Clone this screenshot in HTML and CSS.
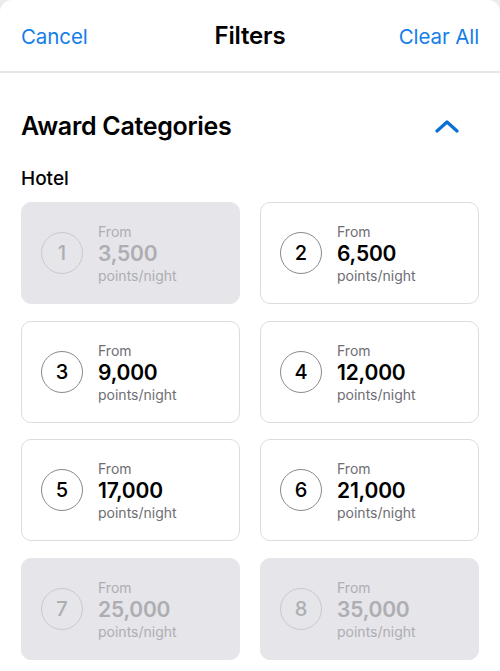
FILE: index.html
```html
<!DOCTYPE html>
<html>
<head>
<meta charset="utf-8">
<link rel="stylesheet" href="styles.css">
</head>
<body>
<div class="sheet">
  <header class="topbar">
    <span class="link">Cancel</span>
    <span class="title">Filters</span>
    <span class="link right">Clear All</span>
  </header>
  <section class="section">
    <div class="section-head">
      <h2>Award Categories</h2>
      <svg class="chev" width="24" height="14" viewBox="0 0 24 14"><path d="M2 12 L12 3 L22 12" fill="none" stroke="#0a70d6" stroke-width="3.2" stroke-linecap="round" stroke-linejoin="round"/></svg>
    </div>
    <h3>Hotel</h3>
    <div class="grid">
      <div class="card disabled"><div class="num">1</div><div class="info"><div class="from">From</div><div class="pts">3,500</div><div class="unit">points/night</div></div></div>
      <div class="card"><div class="num">2</div><div class="info"><div class="from">From</div><div class="pts">6,500</div><div class="unit">points/night</div></div></div>
      <div class="card"><div class="num">3</div><div class="info"><div class="from">From</div><div class="pts">9,000</div><div class="unit">points/night</div></div></div>
      <div class="card"><div class="num">4</div><div class="info"><div class="from">From</div><div class="pts">12,000</div><div class="unit">points/night</div></div></div>
      <div class="card"><div class="num">5</div><div class="info"><div class="from">From</div><div class="pts">17,000</div><div class="unit">points/night</div></div></div>
      <div class="card"><div class="num">6</div><div class="info"><div class="from">From</div><div class="pts">21,000</div><div class="unit">points/night</div></div></div>
      <div class="card disabled"><div class="num">7</div><div class="info"><div class="from">From</div><div class="pts">25,000</div><div class="unit">points/night</div></div></div>
      <div class="card disabled"><div class="num">8</div><div class="info"><div class="from">From</div><div class="pts">35,000</div><div class="unit">points/night</div></div></div>
    </div>
  </section>
</div>
</body>
</html>
```
FILE: styles.css
```css
html, body {
  margin: 0;
  padding: 0;
  background: #ececec;
  height: 671px;
  overflow: hidden;
}
body {
  font-family: Inter, "Noto Sans", sans-serif;
  color: #000;
}
.sheet {
  background: #fff;
  border-radius: 12px 12px 0 0;
  height: 671px;
}
.topbar {
  height: 71px;
  display: grid;
  grid-template-columns: 1fr auto 1fr;
  align-items: center;
  padding: 0 21px 0 21px;
  border-bottom: 2px solid #e6e6e6;
  box-sizing: content-box;
}
.link {
  color: #147de8;
  font-size: 20.5px;
  letter-spacing: -0.1px;
  padding-top: 2px;
}
.link.right {
  justify-self: end;
}
.title {
  font-size: 24px;
  font-weight: 600;
  letter-spacing: -0.2px;
}
.section {
  padding: 0 21px;
}
.section-head {
  display: flex;
  align-items: center;
  justify-content: space-between;
  margin-top: 38px;
  height: 30px;
}
.section-head h2 {
  margin: 0;
  font-size: 25px;
  font-weight: 600;
  letter-spacing: -0.3px;
  line-height: 30px;
}
.chev {
  margin-right: 20px;
}
h3 {
  margin: 27px 0 0;
  font-size: 19px;
  font-weight: 500;
  line-height: 22px;
}
.grid {
  margin-top: 12px;
  display: grid;
  grid-template-columns: 1fr 1fr;
  column-gap: 20px;
  row-gap: 16.67px;
}
.card {
  height: 102px;
  box-sizing: border-box;
  border: 1px solid #dcdce0;
  border-radius: 10px;
  display: flex;
  align-items: center;
  padding-left: 19px;
  gap: 15px;
}
.num {
  width: 42px;
  height: 42px;
  box-sizing: border-box;
  border: 1px solid #8a8a8e;
  border-radius: 50%;
  display: flex;
  align-items: center;
  justify-content: center;
  font-size: 20px;
  font-weight: 500;
}
.info {
  padding-top: 2px;
}
.from, .unit {
  font-size: 14px;
  line-height: 18px;
  color: #6e6e73;
}
.pts {
  font-size: 21px;
  font-weight: 600;
  line-height: 26px;
  letter-spacing: -0.2px;
}
.card.disabled {
  background: #e5e5ea;
  border-color: #e5e5ea;
}
.card.disabled .num {
  border-color: #cacace;
  color: #aeaeb2;
}
.card.disabled .from,
.card.disabled .unit,
.card.disabled .pts {
  color: #aeaeb2;
}
```
